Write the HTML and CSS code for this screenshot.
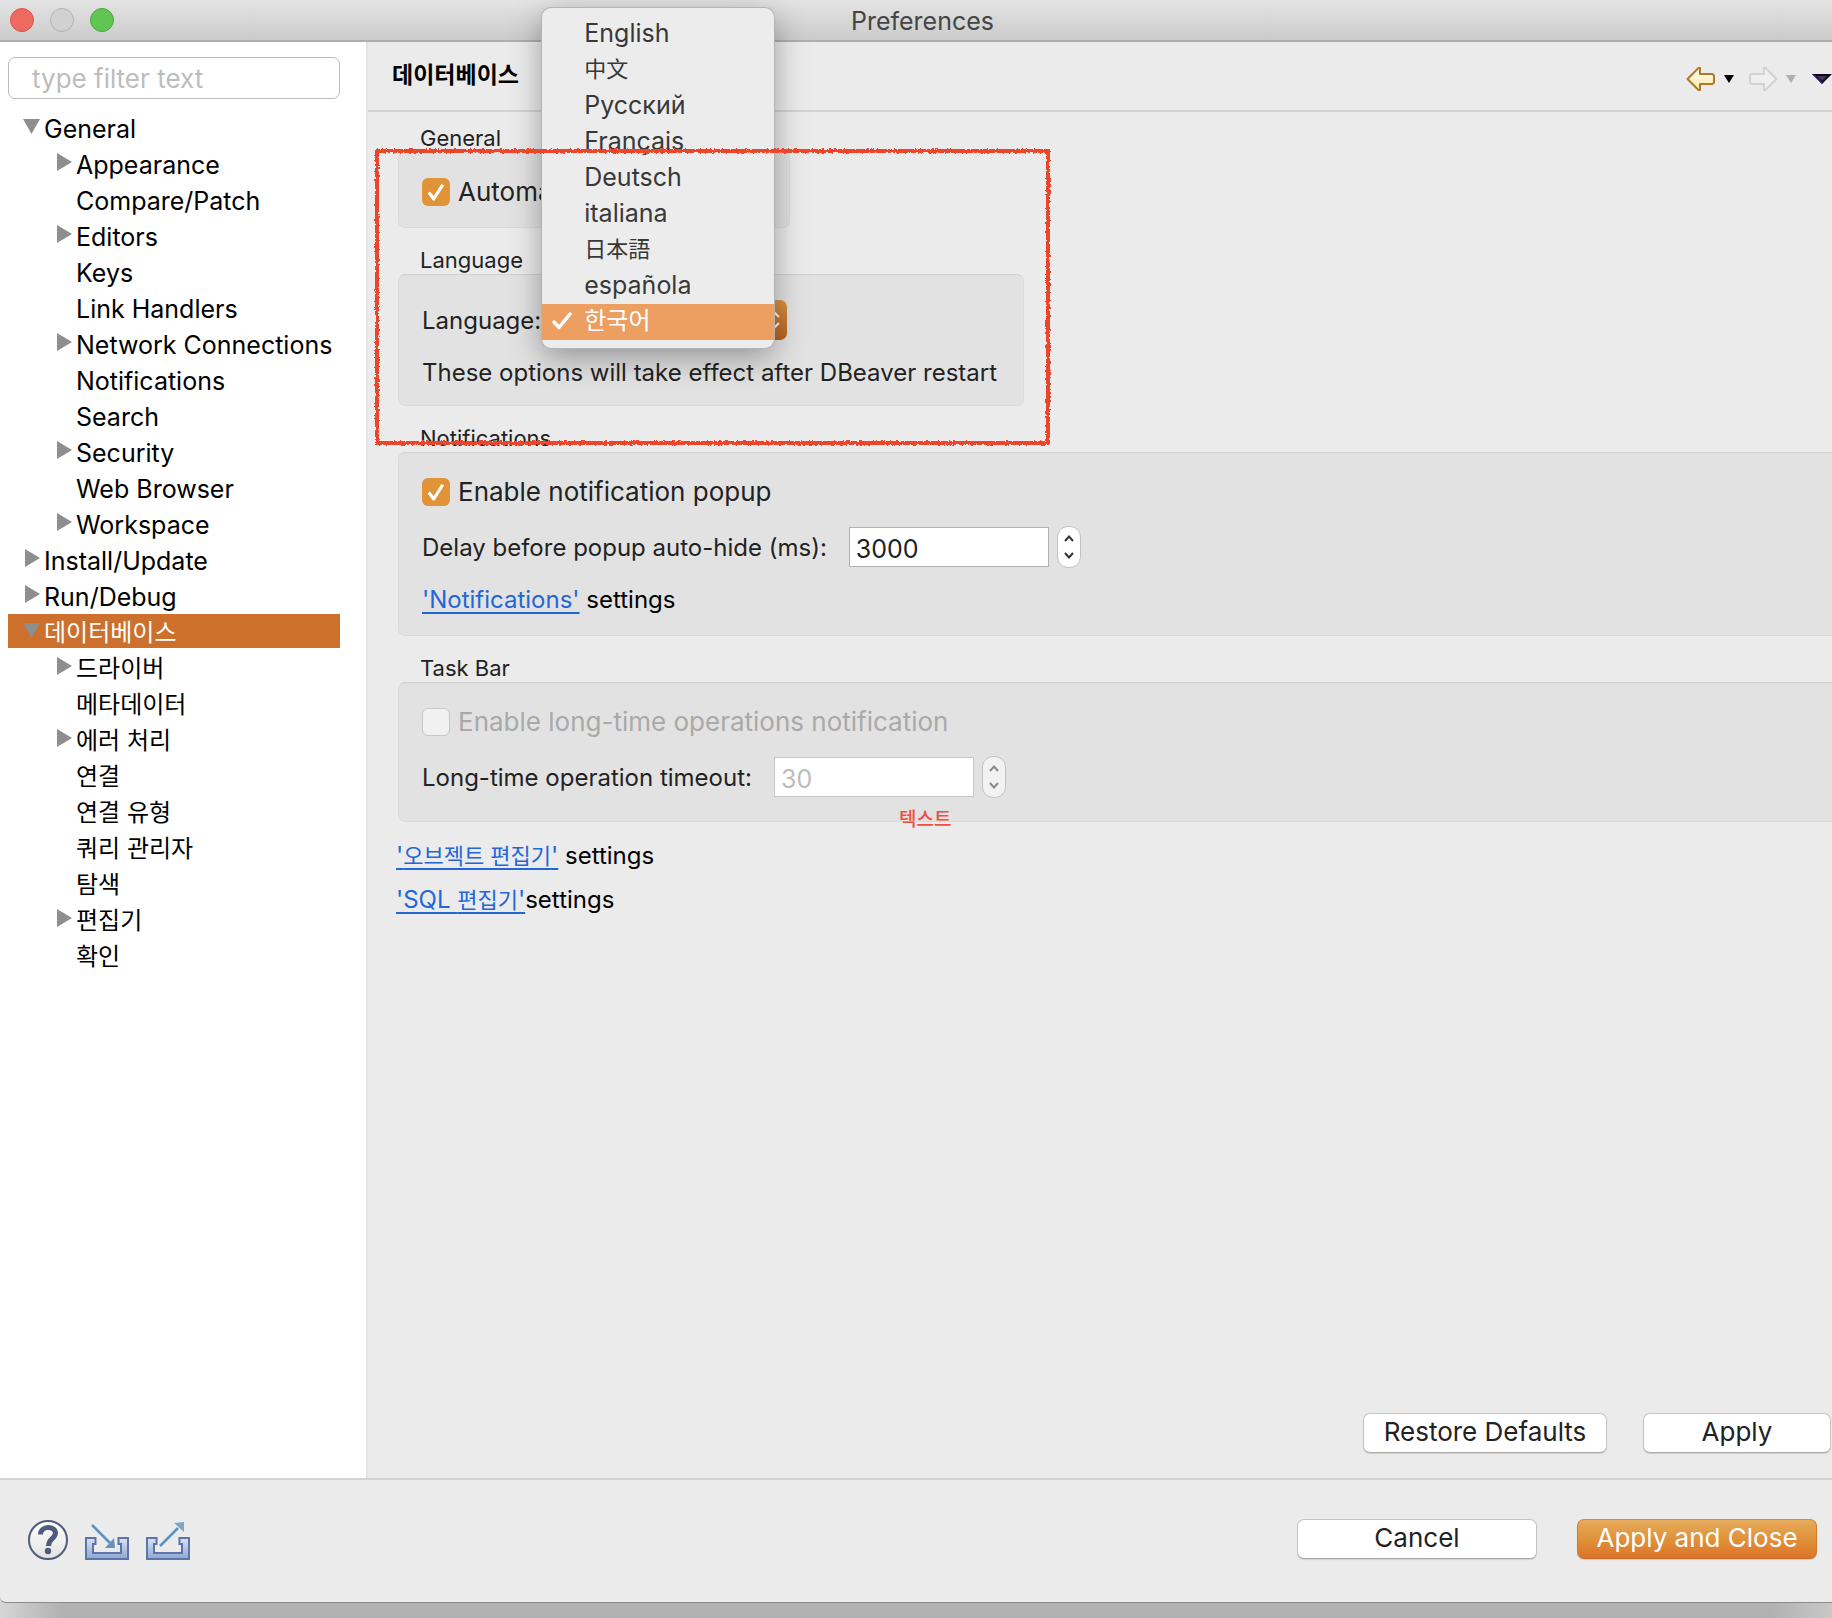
FILE: index.html
```html
<!DOCTYPE html>
<html lang="ko">
<head>
<meta charset="utf-8">
<title>Preferences</title>
<link rel="stylesheet" href="styles.css">
</head>
<body>
<div class="window">
  <header class="titlebar">
    <div class="lights">
      <button class="light light-close" aria-label="Close"></button>
      <button class="light light-min" aria-label="Minimize" disabled></button>
      <button class="light light-zoom" aria-label="Zoom"></button>
    </div>
    <h1 class="window-title">Preferences</h1>
  </header>

  <div class="columns">
    <nav class="sidebar" aria-label="Preference pages">
      <input class="filter" type="text" placeholder="type filter text" aria-label="Filter">
      <ul class="tree">
        <li class="node open">General</li>
        <li class="node child closed">Appearance</li>
        <li class="node child">Compare/Patch</li>
        <li class="node child closed">Editors</li>
        <li class="node child">Keys</li>
        <li class="node child">Link Handlers</li>
        <li class="node child closed">Network Connections</li>
        <li class="node child">Notifications</li>
        <li class="node child">Search</li>
        <li class="node child closed">Security</li>
        <li class="node child">Web Browser</li>
        <li class="node child closed">Workspace</li>
        <li class="node closed">Install/Update</li>
        <li class="node closed">Run/Debug</li>
        <li class="node open ko selected">데이터베이스</li>
        <li class="node child ko closed">드라이버</li>
        <li class="node child ko">메타데이터</li>
        <li class="node child ko closed">에러 처리</li>
        <li class="node child ko">연결</li>
        <li class="node child ko">연결 유형</li>
        <li class="node child ko">쿼리 관리자</li>
        <li class="node child ko">탐색</li>
        <li class="node child ko closed">편집기</li>
        <li class="node child ko">확인</li>
      </ul>
    </nav>

    <main class="page">
      <div class="page-head">
        <h2 class="page-title">데이터베이스</h2>
        <div class="history">
          <button class="tool" aria-label="Back">
            <svg width="30" height="24" viewBox="0 0 30 24"><defs><linearGradient id="gold" x1="0" y1="0" x2="0" y2="1"><stop offset="0" stop-color="#fffef6"/><stop offset="1" stop-color="#fbe9a4"/></linearGradient></defs><path d="M1.500 12 12.500 1H14V7H26.500L28 8.500V15.500L26.500 17H14V23H12.500Z" fill="url(#gold)" stroke="#ae7a28" stroke-width="2" stroke-linejoin="round"/></svg>
          </button>
          <button class="tool" aria-label="Back history"><svg width="10" height="8" viewBox="0 0 10 8"><path d="M0 0H10L5 8Z" fill="#000"/></svg></button>
          <button class="tool tool-next" aria-label="Forward" disabled>
            <svg width="30" height="24" viewBox="0 0 30 24"><path d="M28.500 12 17.500 1H16V7H3.500L2 8.500V15.500L3.500 17H16V23H17.500Z" fill="#efefef" stroke="#d2d2d2" stroke-width="2" stroke-linejoin="round"/></svg>
          </button>
          <button class="tool" aria-label="Forward history" disabled><svg width="10" height="8" viewBox="0 0 10 8"><path d="M0 0H10L5 8Z" fill="#b0b0b0"/></svg></button>
          <button class="tool tool-menu" aria-label="View menu"><svg width="20" height="10" viewBox="0 0 20 10"><path d="M0 0H20L10 10Z" fill="#0d0818"/><path d="M0 0 10 10 11 9 3 1Z" fill="#3d1396"/><path d="M5 2H15L10 7Z" fill="#463650"/></svg></button>
        </div>
      </div>

      <div class="page-body">
        <section class="group">
          <h3 class="group-title">General</h3>
          <div class="panel panel-updates">
            <label class="check"><input type="checkbox" checked>Automatic updates check</label>
          </div>
        </section>

        <section class="group">
          <h3 class="group-title">Language</h3>
          <div class="panel panel-language">
            <div class="field">
              <label for="language">Language:</label>
              <div class="combo">
                <select id="language"><option>한국어</option></select>
                <svg class="combo-arrows" width="12" height="20" viewBox="0 0 12 20"><path d="M2 7 6 3 10 7M2 13 6 17 10 13" fill="none" stroke="#fff" stroke-width="2"/></svg>
                <ul class="menu" role="listbox" aria-label="Language">
                  <li role="option">English</li>
                  <li role="option" class="han" lang="zh">中文</li>
                  <li role="option">Русский</li>
                  <li role="option">Français</li>
                  <li role="option">Deutsch</li>
                  <li role="option">italiana</li>
                  <li role="option" class="han" lang="ja">日本語</li>
                  <li role="option">española</li>
                  <li role="option" class="picked" aria-selected="true"><svg class="tick" width="20" height="18" viewBox="0 0 20 18"><path d="M2 10 7 15.500 18 2" fill="none" stroke="#fff" stroke-width="3.500" stroke-linecap="round" stroke-linejoin="round"/></svg>한국어</li>
                </ul>
              </div>
            </div>
            <p class="hint">These options will take effect after DBeaver restart</p>
          </div>
          <svg class="marker" viewBox="0 0 680 300" aria-hidden="true"><defs><filter id="chalk" x="-2%" y="-4%" width="104%" height="108%"><feTurbulence type="fractalNoise" baseFrequency="0.4" numOctaves="2" seed="4"/><feDisplacementMap in="SourceGraphic" scale="4" xChannelSelector="R" yChannelSelector="G"/></filter></defs><rect x="5" y="4" width="671" height="292" fill="none" stroke="#ee4429" stroke-width="4" filter="url(#chalk)"/></svg>
        </section>

        <section class="group">
          <h3 class="group-title">Notifications</h3>
          <div class="panel panel-wide panel-notify">
            <label class="check"><input type="checkbox" checked>Enable notification popup</label>
            <div class="field field-number">
              <label for="delay">Delay before popup auto-hide (ms):</label>
              <input class="number" id="delay" type="text" value="3000">
              <button class="stepper" aria-label="Change delay"><svg width="12" height="26" viewBox="0 0 12 26"><path d="M2 7 6 2.500 10 7M2 19 6 23.500 10 19" fill="none" stroke="#333" stroke-width="2"/></svg></button>
            </div>
            <p class="hint"><a href="#notifications">'Notifications'</a> <span class="plain">settings</span></p>
          </div>
        </section>

        <section class="group">
          <h3 class="group-title">Task Bar</h3>
          <div class="panel panel-wide panel-task">
            <label class="check off"><input type="checkbox" disabled>Enable long-time operations notification</label>
            <div class="field field-number">
              <label for="timeout">Long-time operation timeout:</label>
              <input class="number" id="timeout" type="text" value="30" disabled>
              <button class="stepper" aria-label="Change timeout" disabled><svg width="12" height="26" viewBox="0 0 12 26"><path d="M2 7 6 2.500 10 7M2 19 6 23.500 10 19" fill="none" stroke="#8a8a8a" stroke-width="2"/></svg></button>
            </div>
            <span class="note">텍스트</span>
          </div>
        </section>

        <div class="more">
          <p><a href="#objects">'<span class="hangul">오브젝트 편집기</span>'</a> <span class="plain">settings</span></p>
          <p><a href="#sql">'SQL <span class="hangul">편집기</span>'</a><span class="plain">settings</span></p>
        </div>
      </div>

      <div class="page-actions">
        <button class="btn btn-restore">Restore Defaults</button>
        <button class="btn btn-apply">Apply</button>
      </div>
    </main>
  </div>

  <footer class="footer">
    <div class="footer-tools">
      <button class="tool" aria-label="Help">
        <svg width="40" height="40" viewBox="0 0 40 40"><defs><linearGradient id="disc" x1="0" y1="0" x2="0" y2="1"><stop offset="0" stop-color="#fff"/><stop offset="1" stop-color="#e2e2e2"/></linearGradient></defs><circle cx="20" cy="20" r="19" fill="url(#disc)" stroke="#4e5b7c" stroke-width="2"/><path d="M12.500 14.500C12.500 5.500 27.500 5.500 27.500 13C27.500 18.500 20.500 18.500 20.500 26" fill="none" stroke="#4e5b7c" stroke-width="5"/><circle cx="20" cy="31" r="3.200" fill="#4e5b7c"/></svg>
      </button>
      <button class="tool" aria-label="Import">
        <svg width="44" height="38" viewBox="0 0 44 38"><defs><linearGradient id="tray" x1="0" y1="0" x2="0" y2="1"><stop offset="0" stop-color="#dbe2f0"/><stop offset="1" stop-color="#8ea6d2"/></linearGradient></defs><path d="M1 16H10.500V22H8V31H36V22H33.500V16H43V37H1Z" fill="url(#tray)" stroke="#5b74aa" stroke-width="2"/><path d="M7 3 25 21" stroke="#5a93c0" stroke-width="2.500"/><path d="M30 26H20L29 16Z" fill="#6793b8"/></svg>
      </button>
      <button class="tool" aria-label="Export">
        <svg width="44" height="38" viewBox="0 0 44 38"><path d="M1 16H10.500V22H8V31H36V22H33.500V16H43V37H1Z" fill="url(#tray)" stroke="#5b74aa" stroke-width="2"/><path d="M14 24 32 6" stroke="#5a93c0" stroke-width="2.500"/><path d="M38 0V10L28 1Z" fill="#83a5c4"/></svg>
      </button>
    </div>
    <button class="btn btn-foot">Cancel</button>
    <button class="btn btn-foot btn-primary">Apply and Close</button>
  </footer>
</div>
</body>
</html>
```

FILE: styles.css
```css
* { box-sizing: border-box; }

body {
  margin: 0;
  font-family: Inter, "Noto Sans CJK KR", sans-serif;
  font-size: 26px;
  color: #222;
  background: linear-gradient(to right, #d6d6d6, #b2b2b2 60px, #b2b2b2 calc(100% - 60px), #c8c8c8);
}

h1, h2, h3, p, ul { margin: 0; padding: 0; font-weight: 400; }
ul { list-style: none; }
button, input, select { font: inherit; color: inherit; }

.window {
  display: flex;
  flex-direction: column;
  min-height: calc(100vh - 15px);
  margin-bottom: 15px;
  background: #ebebeb;
  border-bottom: 1px solid #8c8c8c;
  border-bottom-left-radius: 6px;
  overflow: hidden;
}

/* Title bar */
.titlebar {
  display: grid;
  grid-template-columns: 1fr auto 1fr;
  align-items: center;
  height: 42px;
  padding-left: 10px;
  background: linear-gradient(#e4e4e4, #cbcbcb);
  border-bottom: 2px solid #aeaeae;
}
.lights { display: flex; gap: 16px; }
.light { width: 24px; height: 24px; padding: 0; border: 1px solid; border-radius: 50%; }
.light-close { background: #ee6a5f; border-color: #d9534a; }
.light-min { background: #d1d1d1; border-color: #b3b3b3; }
.light-zoom { background: #61c554; border-color: #4ca83f; }
.window-title { padding: 2px 0 0 3px; font-size: 25px; line-height: 38px; color: #454545; }

/* Columns */
.columns { display: flex; flex: 1; }
.sidebar {
  flex: 0 0 368px;
  padding: 15px 26px 0 8px;
  background: #fff;
  border-right: 2px solid #e3e3e3;
}
.filter {
  display: block;
  width: 100%;
  height: 42px;
  padding: 0 23px;
  border: 1px solid #bcbcbc;
  border-radius: 7px;
  background: #fff;
}
.filter::placeholder { color: #bdbdbd; opacity: 1; }
.tree { display: grid; gap: 2px; padding-top: 11px; color: #000; font-size: 25px; }
.node {
  position: relative;
  height: 34px;
  line-height: 38px;
  padding-left: 36px;
  white-space: nowrap;
}
.node.child { padding-left: 68px; }
.node.ko { font-size: 24px; }
.node.closed::before, .node.open::before {
  content: "";
  position: absolute;
  top: 7px;
  left: 17px;
  width: 15px;
  height: 18px;
  background: #8e8e8e;
  clip-path: polygon(0 0, 100% 50%, 0 100%);
}
.node.child::before { left: 49px; }
.node.open::before {
  top: 9px;
  left: 15px;
  width: 17px;
  height: 15px;
  clip-path: polygon(0 0, 100% 0, 50% 100%);
}
.node.selected { background: #cc702c; color: #fff; }

/* Page */
.page { display: flex; flex: 1; flex-direction: column; min-width: 0; }
.page-head {
  display: flex;
  justify-content: space-between;
  height: 70px;
  padding-left: 24px;
  border-bottom: 2px solid #d3d3d3;
}
.page-title { font-size: 23px; line-height: 66px; font-weight: 700; color: #000; }
.history { display: flex; align-items: center; gap: 8px; padding-top: 6px; }
.tool { display: block; padding: 0; border: 0; background: none; }
.tool svg { display: block; }
.tool-next { margin-left: 6px; }
.tool-menu { margin-left: 8px; }
.page-body { flex: 1; padding: 10px 0 0 30px; }

.group { position: relative; margin-bottom: 16px; }
.group-title { height: 30px; padding-left: 22px; font-size: 22px; line-height: 32px; }
.panel {
  padding: 25px 23px 0;
  background: #e2e2e2;
  border: 1px solid #dadada;
  border-top-color: #d0d0d0;
  border-radius: 7px;
}
.panel-updates { width: 392px; height: 76px; }
.panel-language { width: 626px; height: 132px; }
.panel-wide { position: relative; border-right: 0; border-radius: 7px 0 0 7px; }
.panel-notify { height: 184px; }
.panel-task { height: 140px; }

.check { display: flex; align-items: center; gap: 8px; height: 28px; line-height: 30px; white-space: nowrap; }
.check input {
  width: 28px;
  height: 28px;
  margin: 0;
  appearance: none;
  border-radius: 6px;
  background: #e09337;
}
.check input:checked::before {
  content: "";
  display: block;
  width: 28px;
  height: 28px;
  background: #fff;
  clip-path: polygon(20% 55%, 28% 48%, 42% 64%, 69% 21%, 79% 27%, 45% 80%, 39% 80%);
}
.check.off { color: #a9a9a9; }
.check.off input { background: #f1f1f1; border: 1px solid #c6c6c6; }

.field { display: flex; align-items: center; gap: 2px; height: 40px; font-size: 24px; white-space: nowrap; }
.field-number { margin-top: 21px; }
.number {
  width: 200px;
  height: 40px;
  margin-left: 20px;
  padding: 4px 6px 0;
  border: 1px solid #b2b2b2;
  background: #fff;
  font-size: 25px;
}
.number:disabled { color: #bcbcbc; border-color: #c8c8c8; }
.stepper {
  display: grid;
  place-items: center;
  width: 24px;
  height: 42px;
  margin-left: 6px;
  padding: 0;
  border: 1px solid #c2c2c2;
  border-radius: 11px;
  background: #fff;
}
.stepper:disabled { background: #f2f2f2; }
.hint { margin-top: 18px; font-size: 24px; line-height: 30px; white-space: nowrap; }
a { color: #2366d8; text-underline-offset: 4px; text-decoration-thickness: 2px; }
.plain { color: #000; }
.more { margin: -4px 0 0 -2px; font-size: 24px; line-height: 44px; white-space: nowrap; }
.more p { height: 44px; }
.hangul { font-size: 22px; }

.combo { position: relative; width: 244px; height: 40px; }
.combo select {
  width: 100%;
  height: 40px;
  padding: 0 44px;
  appearance: none;
  border: 0;
  border-radius: 7px;
  background: linear-gradient(#dd9340, #b96021);
}
.combo-arrows { position: absolute; top: 10px; right: 6px; }
.menu {
  position: absolute;
  z-index: 2;
  top: -292px;
  left: -1px;
  width: 232px;
  padding: 8px 0;
  border-radius: 9px;
  background: #ececec;
  box-shadow: 0 0 0 1px #b4b4b4, 0 10px 32px rgba(0, 0, 0, .35);
  color: #383838;
  font-size: 25px;
}
.menu li { position: relative; height: 36px; padding-left: 42px; line-height: 34px; }
.menu .han { font-size: 22px; }
.menu .picked { background: #ec9f61; color: #fff; font-size: 24px; }
.tick { position: absolute; top: 8px; left: 10px; }

.marker { position: absolute; z-index: 3; top: -97px; left: -26px; width: 680px; height: 300px; overflow: visible; }
.note {
  position: absolute;
  top: 124px;
  left: 500px;
  font-size: 19px;
  line-height: 26px;
  font-weight: 500;
  color: #ef4f3c;
}

/* Buttons */
.page-actions { display: flex; justify-content: flex-end; gap: 36px; padding: 0 1px 25px 0; }
.btn {
  height: 40px;
  padding: 0 0 3px;
  border: 1px solid #c4c4c4;
  border-bottom-color: #ababab;
  border-radius: 7px;
  background: #fff;
  box-shadow: 0 1px 1px rgba(0, 0, 0, .12);
}
.btn-restore { width: 244px; }
.btn-apply { width: 188px; }
.btn-foot { width: 240px; }
.btn-primary {
  border-color: #d98838 #d57a2d #c86a26;
  background: linear-gradient(#e6ac5c, #e0913a 50%, #dc7429);
  color: #fff;
}
.footer {
  display: flex;
  gap: 40px;
  height: 124px;
  padding: 39px 15px 0 28px;
  border-top: 2px solid #d3d3d3;
}
.footer-tools { display: flex; align-items: flex-end; gap: 17px; height: 41px; margin-right: auto; }
```
